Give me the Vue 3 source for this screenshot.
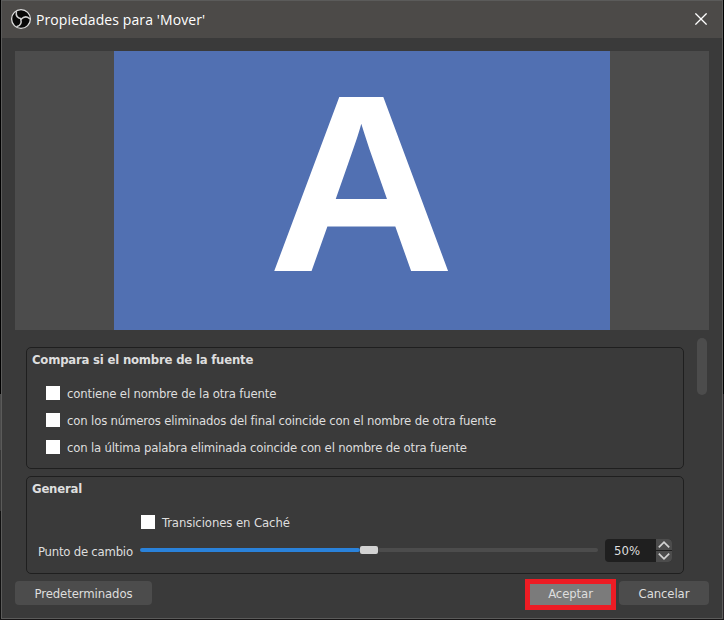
<script setup>
import { ref } from 'vue'

const matches = ref([
  { id: 'a', label: 'contiene el nombre de la otra fuente', checked: false },
  { id: 'b', label: 'con los números eliminados del final coincide con el nombre de otra fuente', checked: false },
  { id: 'c', label: 'con la última palabra eliminada coincide con el nombre de otra fuente', checked: false },
])
const cache = ref(false)
const point = ref(50)
</script>

<template>
  <div class="desktop">
    <div class="edge left"><i class="s1"></i><i class="s2"></i><i class="s3"></i><i class="s4"></i></div>
    <div class="window">
      <header class="titlebar">
        <svg class="logo" width="22" height="22" viewBox="0 0 22 22">
          <circle cx="11" cy="11" r="9.4" fill="#080808" stroke="#dedede" stroke-width="1.3" />
          <g fill="none" stroke="#d0d0d0" stroke-width="1.5" stroke-linecap="round">
            <path d="M6.4 3.8C5.6 7.6 7.6 9.9 11.2 10.8" />
            <path d="M6.4 3.8C5.6 7.6 7.6 9.9 11.2 10.8" transform="rotate(120 11 11)" />
            <path d="M6.4 3.8C5.6 7.6 7.6 9.9 11.2 10.8" transform="rotate(240 11 11)" />
          </g>
        </svg>
        <h1>Propiedades para 'Mover'</h1>
        <svg class="close" width="12" height="12" viewBox="0 0 12 12">
          <path d="M.4.4 11.6 11.6M11.6.4.4 11.6" stroke="#fff" stroke-width="1.3" />
        </svg>
      </header>

      <section class="preview">
        <div class="scene"><span class="letter">A</span></div>
      </section>

      <div class="scroll">
        <div class="groups">
          <fieldset class="group compare">
            <h2>Compara si el nombre de la fuente</h2>
            <label v-for="m in matches" :key="m.id" class="check">
              <span class="box" :class="{ on: m.checked }"></span>
              <span class="t" :class="'t-' + m.id">{{ m.label }}</span>
            </label>
          </fieldset>
          <fieldset class="group general">
            <h2>General</h2>
            <label class="check cache">
              <span class="box" :class="{ on: cache }"></span>
              <span class="t t-cache">Transiciones en Caché</span>
            </label>
            <div class="row">
              <span class="t-point">Punto de cambio</span>
              <div class="slider">
                <div class="fill" :style="{ width: point - 2 + '%' }"></div>
                <div class="thumb"></div>
                <div class="rest"></div>
              </div>
              <div class="spin">
                <span class="value">{{ point }}%</span>
                <div class="arrows">
                  <span><svg width="12" height="9" viewBox="0 0 12 9"><path d="M.8 7.4 6 2.2 11.2 7.4" /></svg></span>
                  <span><svg width="12" height="9" viewBox="0 0 12 9"><path d="M.8 1.6 6 6.8 11.2 1.6" /></svg></span>
                </div>
              </div>
            </div>
          </fieldset>
        </div>
        <div class="scrollbar"></div>
      </div>

      <footer>
        <button class="btn defaults">Predeterminados</button>
        <button class="btn accept">Aceptar</button>
        <button class="btn cancel">Cancelar</button>
      </footer>
    </div>
    <div class="edge right"><i class="s1"></i><i class="s2"></i></div>
  </div>
</template>

<style>
body { background: #111; overflow: hidden; }
</style>

<style scoped>
* { box-sizing: border-box; }
.desktop {
  width: 724px; height: 620px; display: flex; padding-bottom: 1px;
  background: #171516; color: #dedede;
  font: 13px/18px "DejaVu Sans Condensed", "DejaVu Sans", sans-serif;
  font-stretch: condensed; white-space: nowrap;
}
.edge { width: 1px; display: flex; flex-direction: column; }
.edge i { display: block; flex: none; background: #000; }
.left .s1 { height: 394px; }
.left .s2 { height: 56px; background: #4b4b4b; }
.left .s3 { height: 61px; background: #363636; }
.left .s4 { flex: 1; background: #111; }
.right .s1 { height: 394px; }
.right .s2 { flex: 1; background: #272225; }
.window {
  width: 722px; height: 619px; border: 1px solid #5b5b5a; background: #3a3a3a;
  display: flex; flex-direction: column;
}
.titlebar {
  height: 37px; flex: none; background: #4c4a48; display: flex; align-items: center;
  padding: 0 15px 0 8px; color: #fff;
}
.logo { display: block; margin-top: -1px; }
h1 { margin: 0 auto 0 4px; font: 14px/20px "Open Sans", sans-serif; letter-spacing: 0.1px; }
.close { display: block; margin-top: -1px; }
.preview {
  margin: 13px 13px 0 13px; height: 279px; flex: none; background: #4c4c4c;
  display: flex; justify-content: center;
}
.scene { width: 496px; background: #5170b2; display: flex; justify-content: center; }
.letter {
  font: bold 253px/265px "Liberation Sans", sans-serif; color: #fff;
  height: 265px; transform: scaleX(1.024); margin-left: -1px;
}
.scroll { display: flex; height: 244px; flex: none; padding: 0 14px 0 24px; }
.groups { width: 658px; padding-top: 17px; }
.group {
  margin: 0; padding: 3px 5px; border: 1px solid #1f1f1f; border-radius: 5px; min-width: 0;
}
.compare { height: 122px; margin-bottom: 7px; }
.general { height: 98px; }
h2 { margin: 0 0 11px; font: inherit; font-weight: bold; line-height: 18px; letter-spacing: -0.21px; }
.check { display: flex; align-items: center; height: 27px; padding-left: 14px; gap: 7px; }
.box { width: 14px; height: 14px; background: #fff; flex: none; margin-top: -2px; }
.box.on { background: #2a82da; }
.t-a, .t-b { letter-spacing: -0.165px; }
.t-c { letter-spacing: -0.185px; }
.t-cache { letter-spacing: -0.1px; }
.general h2 { margin-bottom: 12px; }
.cache { padding-left: 109px; height: 25px; }
.row { display: flex; height: 24px; margin-top: 3px; padding-left: 6px; align-items: center; }
.t-point { width: 95px; margin-top: 3px; letter-spacing: -0.23px; }
.slider { display: flex; align-items: center; width: 458px; margin-left: 7px; }
.fill, .rest { height: 4px; border-radius: 2px; background: #2a82da; flex: none; }
.thumb { width: 18px; height: 8px; border-radius: 2px; background: #d2d2d2; flex: none; }
.rest { flex: 1; background: #4c4c4c; }
.spin {
  width: 67px; height: 23px; margin-left: 7px; background: #1f1f1f; border-radius: 4px;
  display: flex; overflow: hidden; align-items: stretch;
}
.value { width: 51px; padding-left: 9px; line-height: 24px; }
.arrows { width: 16px; display: grid; grid-template-rows: 11px 11px; gap: 1px; }
.arrows span { background: #4c4c4c; display: flex; justify-content: center; align-items: center; }
.arrows path { fill: none; stroke: #d2d2d2; stroke-width: 1.7; }
.scrollbar { width: 10px; height: 57px; margin: 8px 0 0 13px; border-radius: 5px; background: #4c4c4c; }
footer { display: flex; align-items: center; padding: 0 13px; height: 38px; }
.btn {
  height: 24px; padding: 0; border: 0; border-radius: 4px; background: #4c4c4c;
  color: #dedede; font: inherit; line-height: 25px; text-align: center; letter-spacing: -0.1px;
}
.defaults { width: 137px; margin-right: auto; }
.accept { width: 91px; height: 31px; margin-top: 2px; border: 5px solid #ed1c24; border-radius: 0; background: #7b7b7b; line-height: 20px; }
.cancel { width: 90px; margin-left: 3px; }
</style>
